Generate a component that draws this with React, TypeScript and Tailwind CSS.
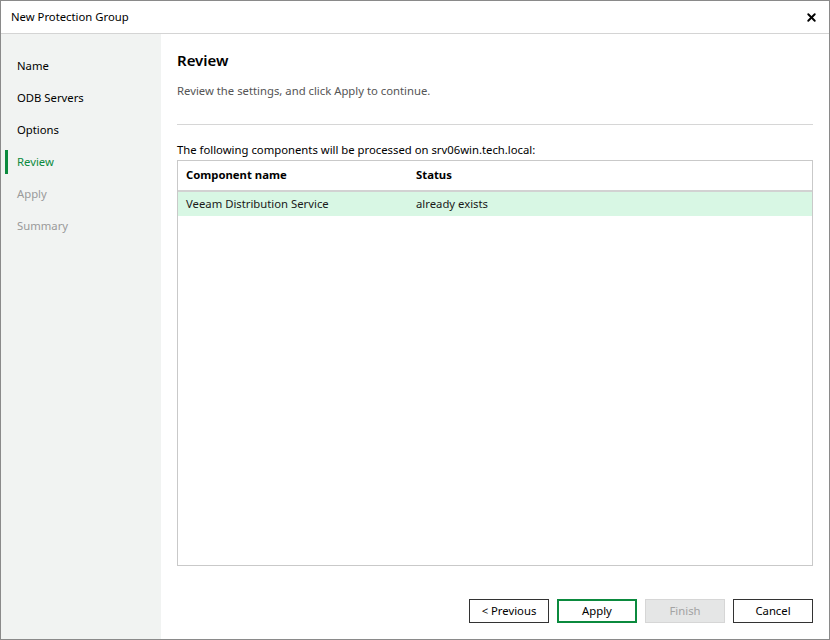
import { X } from 'lucide-react'

const steps = [
  { label: 'Name', state: 'done' },
  { label: 'ODB Servers', state: 'done' },
  { label: 'Options', state: 'done' },
  { label: 'Review', state: 'active' },
  { label: 'Apply', state: 'todo' },
  { label: 'Summary', state: 'todo' },
]

const rows = [{ name: 'Veeam Distribution Service', status: 'already exists' }]

export default function App() {
  return (
    <div
      className="w-[830px] h-[640px] flex flex-col border border-[#8a8a8a] bg-white text-[11.3px] text-[#1a1a1a]"
      style={{ fontFamily: "'Noto Sans', 'Open Sans', sans-serif" }}
    >
      {/* title bar */}
      <div className="h-[33px] shrink-0 flex items-center justify-between pl-[10px] pr-[11px] border-b border-[#d4d4d4]">
        <span className="text-black">New Protection Group</span>
        <X size={13} strokeWidth={3.5} className="text-black" />
      </div>

      <div className="flex-1 flex min-h-0">
        {/* steps */}
        <div className="w-[160px] shrink-0 bg-[#f1f3f2] pt-[16px]">
          {steps.map((s) => (
            <div key={s.label} className="relative h-[32px] flex items-center pl-[16px]">
              {s.state === 'active' && <div className="absolute left-[4px] top-[4px] w-[3px] h-[24px] bg-[#0b8a3e]" />}
              <span
                className={
                  s.state === 'active'
                    ? 'text-[#0b8a3e]'
                    : s.state === 'todo'
                      ? 'text-[#9a9a9a]'
                      : 'text-black'
                }
              >
                {s.label}
              </span>
            </div>
          ))}
        </div>

        {/* main */}
        <div className="flex-1 flex flex-col px-4 pt-[16px] pb-[16px]">
          <h1 className="text-[15px] font-semibold leading-[20px] text-black">Review</h1>
          <p className="mt-[12px] leading-[18px] text-[#555]">Review the settings, and click Apply to continue.</p>
          <div className="mt-[24px] h-px bg-[#d6d6d6]" />
          <p className="mt-[16px] leading-[18px] text-black">The following components will be processed on srv06win.tech.local:</p>

          <div className="mt-[1px] flex-1 border border-[#c9c9c9] flex flex-col">
            <div className="h-[31px] flex items-center font-bold text-black border-b-2 border-[#d2d2d2]">
              <div className="w-[238px] pl-[8px]">Component name</div>
              <div className="flex-1">Status</div>
            </div>
            {rows.map((r) => (
              <div key={r.name} className="h-[24px] flex items-center bg-[#d8f7e4]">
                <div className="w-[238px] pl-[8px]">{r.name}</div>
                <div className="flex-1">{r.status}</div>
              </div>
            ))}
          </div>

          <div className="mt-[33px] flex justify-end gap-[8px]">
            <button className="w-[80px] h-[24px] border border-[#333] bg-white text-black">&lt; Previous</button>
            <button className="w-[80px] h-[24px] border-2 border-[#0b8a3e] bg-white text-black">Apply</button>
            <button disabled className="w-[80px] h-[24px] border border-[#d6d6d6] bg-[#e5e6e6] text-[#a3a3a3]">
              Finish
            </button>
            <button className="w-[80px] h-[24px] border border-[#333] bg-white text-black">Cancel</button>
          </div>
        </div>
      </div>
    </div>
  )
}
